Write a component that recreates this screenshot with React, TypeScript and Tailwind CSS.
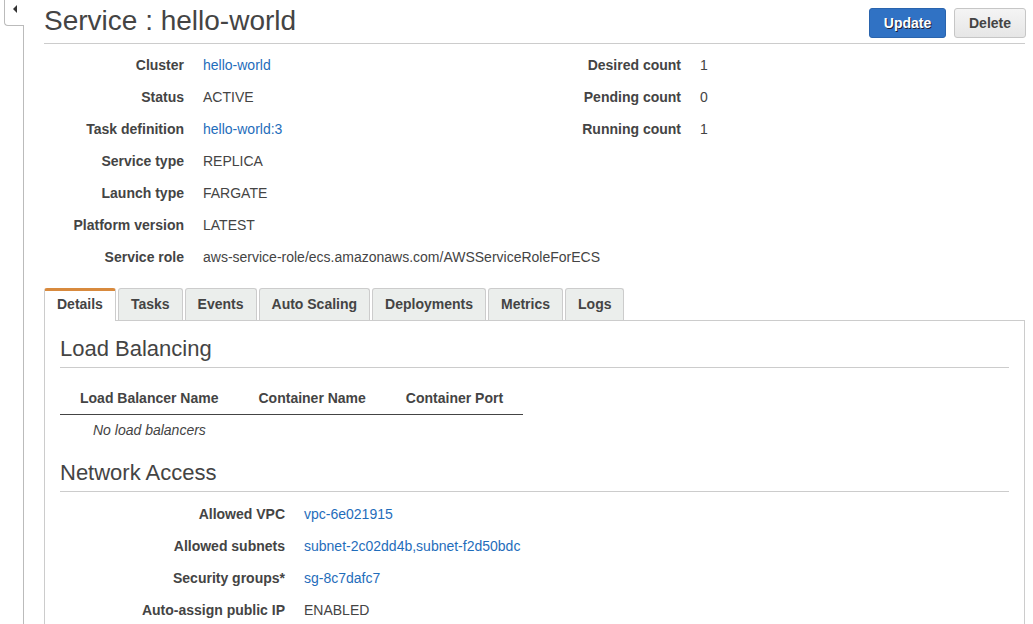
import React from "react";

const font = { fontFamily: '"Liberation Sans", Arial, sans-serif' };

function Row({ label, value, link, lw }: { label: string; value: string; link?: boolean; lw: string }) {
  return (
    <div className="flex h-[32px] items-center whitespace-nowrap">
      <div className={`${lw} shrink-0 text-right font-bold text-[#444]`}>{label}</div>
      <div className={`pl-[19px] ${link ? "text-[#1f6dbb]" : "text-[#444]"}`}>{value}</div>
    </div>
  );
}

const tabs = ["Details", "Tasks", "Events", "Auto Scaling", "Deployments", "Metrics", "Logs"];

export default function App() {
  return (
    <div style={font} className="flex h-[624px] w-[1033px] overflow-hidden bg-white text-[14px] text-[#444]">
      {/* sidebar */}
      <div className="flex w-[24px] shrink-0 flex-col">
        <div className="ml-[4px] flex h-[26px] items-start justify-start rounded-bl-[4px] border-b border-l border-[#bbb] pl-[8px] pt-[5px]">
          <div className="h-0 w-0 border-y-[4px] border-r-[4px] border-y-transparent border-r-[#333]" />
        </div>
        <div className="flex-1 border-r border-[#bbb]" />
      </div>
      {/* main */}
      <div className="ml-[20px] w-[981px] shrink-0">
        <div className="flex h-[44px] items-start justify-between border-b border-[#ccc]">
          <h1 className="mt-[7px] text-[28px] leading-[28px] text-[#444]">Service : hello-world</h1>
          <div className="mr-[-1px] mt-[8px] flex gap-[8px]">
            <button className="h-[30px] w-[77px] rounded-[3px] border border-[#2a64ad] bg-[#3072c4] font-bold text-white [text-shadow:1px_1px_0_#223]">
              Update
            </button>
            <button className="h-[30px] w-[72px] rounded-[3px] border border-[#c6c6c6] bg-gradient-to-b from-[#f4f4f4] to-[#e6e6e6] font-bold text-[#444]">
              Delete
            </button>
          </div>
        </div>
        <div className="mt-[5px] flex">
          <div className="w-[500px] shrink-0">
            <Row lw="w-[140px]" label="Cluster" value="hello-world" link />
            <Row lw="w-[140px]" label="Status" value="ACTIVE" />
            <Row lw="w-[140px]" label="Task definition" value="hello-world:3" link />
            <Row lw="w-[140px]" label="Service type" value="REPLICA" />
            <Row lw="w-[140px]" label="Launch type" value="FARGATE" />
            <Row lw="w-[140px]" label="Platform version" value="LATEST" />
            <Row lw="w-[140px]" label="Service role" value="aws-service-role/ecs.amazonaws.com/AWSServiceRoleForECS" />
          </div>
          <div>
            <Row lw="w-[137px]" label="Desired count" value="1" />
            <Row lw="w-[137px]" label="Pending count" value="0" />
            <Row lw="w-[137px]" label="Running count" value="1" />
          </div>
        </div>
        {/* tabs */}
        <div className="mt-[15px] flex items-end gap-[2px]">
          {tabs.map((t, i) =>
            i === 0 ? (
              <div
                key={t}
                className="relative z-10 mb-[-1px] flex h-[33px] items-center rounded-t-[3px] border-x border-t-[3px] border-x-[#ccc] border-t-[#d88a3e] bg-white px-[12px] pb-[3px] font-bold text-[#444]"
              >
                {t}
              </div>
            ) : (
              <div
                key={t}
                className="flex h-[32px] items-center rounded-t-[3px] border-x border-t border-[#ccc] bg-[#ebeeec] px-[12px] font-bold text-[#444]"
              >
                {t}
              </div>
            )
          )}
        </div>
        <div className="h-[400px] border-x border-t border-x-[#ccc] border-t-[#ccc] border-l-dotted border-r-dotted px-[15px]">
          <div className="mt-[9px] flex h-[38px] items-center border-b border-[#ccc] text-[22px] text-[#444]">Load Balancing</div>
          <table className="mt-[14px] border-collapse">
            <thead>
              <tr className="h-[32px] border-b border-[#444]">
                <th className="px-[20px] pt-[2px] text-left font-bold">Load Balancer Name</th>
                <th className="px-[20px] pt-[2px] text-left font-bold">Container Name</th>
                <th className="px-[20px] pt-[2px] text-left font-bold">Container Port</th>
              </tr>
            </thead>
            <tbody>
              <tr className="h-[32px]">
                <td colSpan={3} className="pl-[33px] italic">No load balancers</td>
              </tr>
            </tbody>
          </table>
          <div className="mt-[8px] flex h-[38px] items-center border-b border-[#ccc] text-[22px] text-[#444]">Network Access</div>
          <div className="mt-[6px]">
            <Row lw="w-[225px]" label="Allowed VPC" value="vpc-6e021915" link />
            <Row lw="w-[225px]" label="Allowed subnets" value="subnet-2c02dd4b,subnet-f2d50bdc" link />
            <Row lw="w-[225px]" label="Security groups*" value="sg-8c7dafc7" link />
            <Row lw="w-[225px]" label="Auto-assign public IP" value="ENABLED" />
          </div>
        </div>
      </div>
    </div>
  );
}
